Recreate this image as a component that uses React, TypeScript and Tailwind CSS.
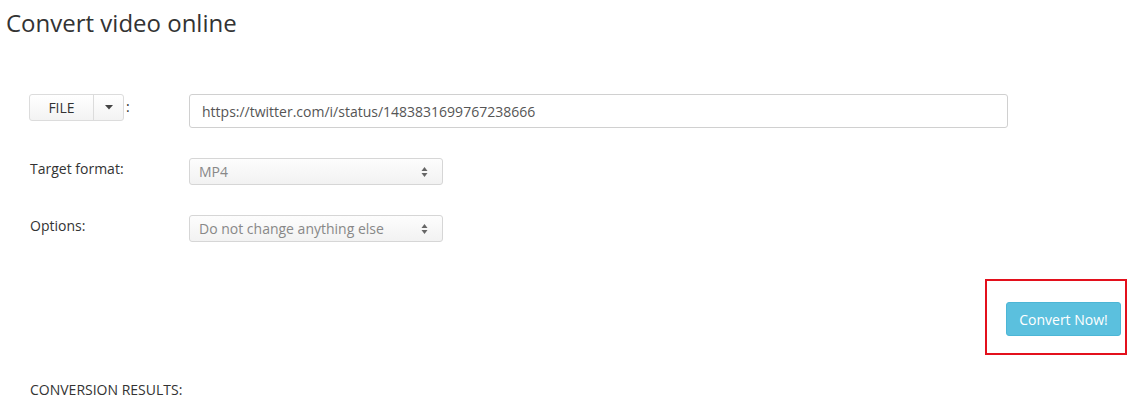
const font = { fontFamily: '"Open Sans", "Liberation Sans", sans-serif' };

const SelectArrows = () => (
  <svg width="7" height="12" viewBox="0 0 7 12" className="text-[#666]">
    <path d="M3.5 1 L6.5 5 L0.5 5 Z" fill="currentColor" />
    <path d="M3.5 11 L6.5 7 L0.5 7 Z" fill="currentColor" />
  </svg>
);

const FakeSelect = ({ value }: { value: string }) => (
  <div className="w-[254px] h-[27px] flex items-center justify-between pl-[9px] pr-[14px] border border-[#d6d6d6] rounded-[3px] bg-gradient-to-b from-[#fdfdfd] to-[#f2f2f2] text-[14px] text-[#888]">
    <span>{value}</span>
    <SelectArrows />
  </div>
);

export default function App() {
  return (
    <div className="w-[1128px] h-[400px] bg-white text-[#333] overflow-hidden" style={font}>
      <h1 className="ml-[6px] pt-[8px] text-[24px] leading-[30px] text-[#333] font-normal">
        Convert video online
      </h1>

      <div className="pl-[29px] mt-[56px]">
        <div className="flex items-start">
          <div className="w-[160px] flex items-center gap-[2px]">
            <div className="flex h-[27px] border border-[#dcdcdc] rounded-[3px] bg-gradient-to-b from-white to-[#f3f3f3] text-[14px] font-medium text-[#333]">
              <span className="w-[64px] flex items-center justify-center border-r border-[#dcdcdc]">FILE</span>
              <span className="w-[29px] flex items-center justify-center">
                <svg width="8" height="5" viewBox="0 0 8 5">
                  <path d="M0 0 L8 0 L4 4.5 Z" fill="#444" />
                </svg>
              </span>
            </div>
            <span className="text-[14px] -mt-[2px]">:</span>
          </div>
          <div className="w-[819px] h-[34px] flex items-center px-[12px] border border-[#d0d0d0] rounded-[3px] text-[14px] text-[#555]">
            https://twitter.com/i/status/1483831699767238666
          </div>
        </div>

        <div className="flex items-start mt-[30px]">
          <div className="w-[160px] pl-[1px] text-[14px] leading-[20px] pt-[1px]">Target format:</div>
          <FakeSelect value="MP4" />
        </div>

        <div className="flex items-start mt-[30px]">
          <div className="w-[160px] pl-[1px] text-[14px] leading-[20px] pt-[1px]">Options:</div>
          <FakeSelect value="Do not change anything else" />
        </div>
      </div>

      <div className="flex justify-end pr-[1px] mt-[37px]">
        <div className="w-[142px] h-[76px] border-2 border-[#e3101c] flex justify-end pt-[21px] pr-[4px]">
          <button className="w-[115px] h-[34px] rounded-[3px] bg-[#5bc0de] border border-[#4cb6d6] text-white text-[14px]">
            Convert Now!
          </button>
        </div>
      </div>

      <div className="pl-[30px] mt-[24px] text-[14px] uppercase">Conversion results:</div>
    </div>
  );
}
